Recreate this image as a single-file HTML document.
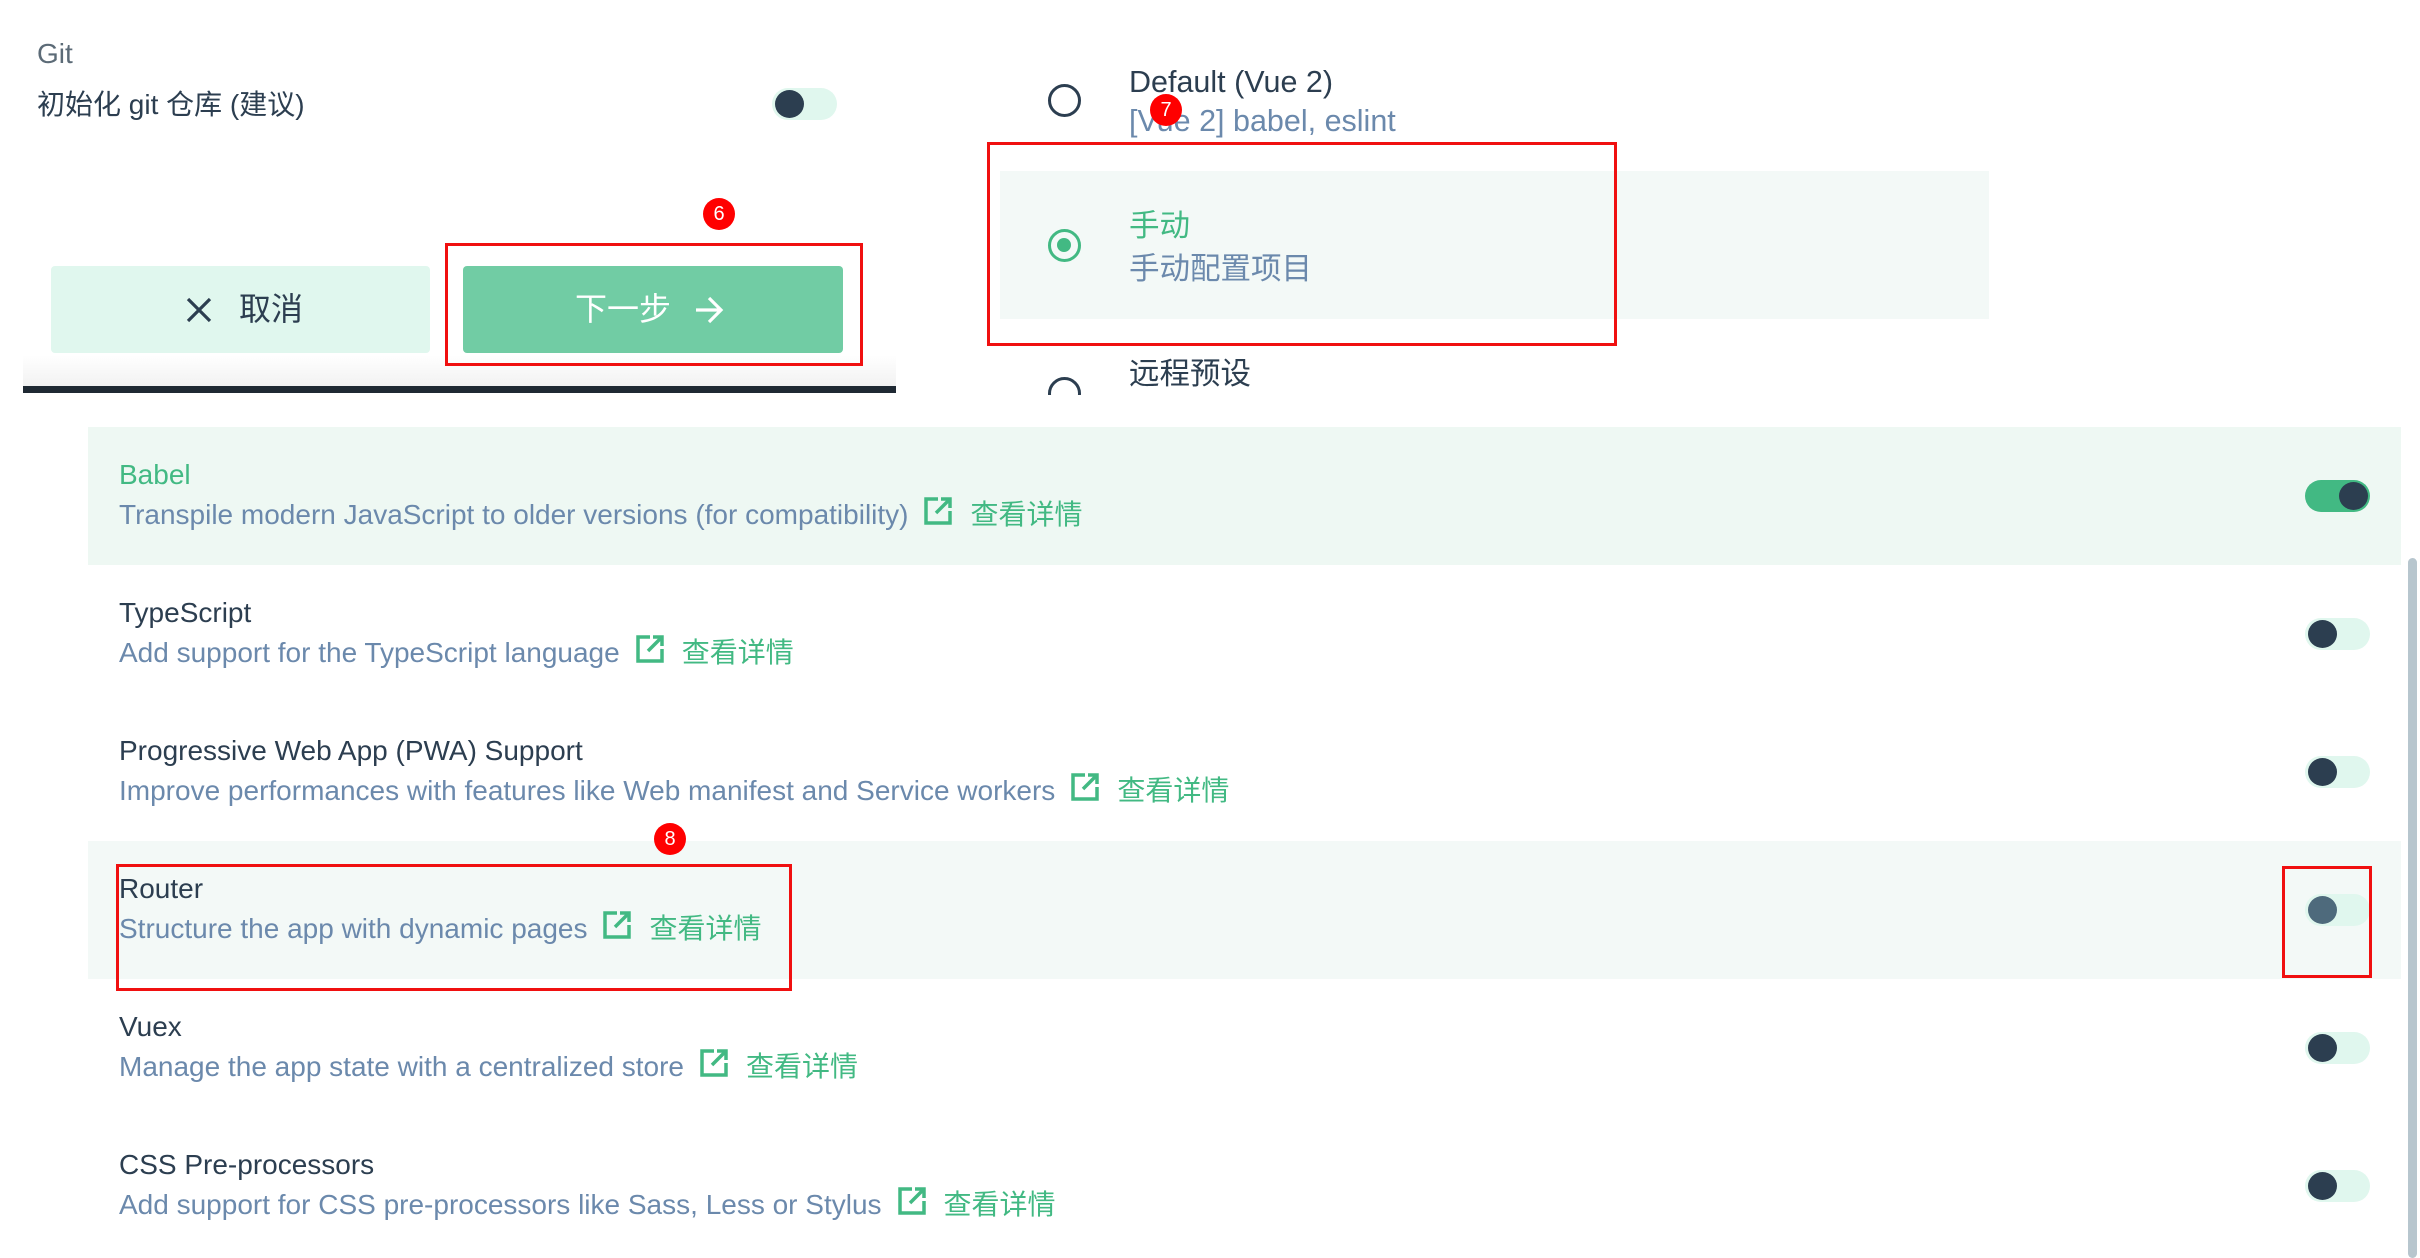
<!DOCTYPE html>
<html><head><meta charset="utf-8"><style>
*{margin:0;padding:0;box-sizing:border-box}
body{width:2420px;height:1250px;background:#fff;position:relative;overflow:hidden;font-family:"Liberation Sans","Noto Sans CJK SC",sans-serif;color:#2c3e50}
.a{position:absolute;white-space:nowrap}
.tog{position:absolute;width:65px;height:32px;border-radius:16px;background:#e0f7ee}
.tog i{position:absolute;top:2px;left:3px;width:29px;height:28px;border-radius:50%;background:#2c3e50}
.row{position:absolute;left:88px;width:2313px;height:138px}
.row .t{position:absolute;left:31px;top:32px;font-size:28px;line-height:32px;color:#2c3e50}
.row .d{position:absolute;left:31px;top:70px;font-size:28px;line-height:36px;color:#6b89ac;white-space:nowrap;display:flex;align-items:center}
.row .d svg{margin:0 17px 0 15px;position:relative;top:-4px}
.row .d span.g{color:#42b983;font-size:28px}
.badge{position:absolute;width:32px;height:32px;border-radius:50%;background:#f00;color:#fff;font-size:20px;line-height:32px;text-align:center;z-index:5}
.box{position:absolute;border:3px solid #f01010;z-index:4}
</style></head><body>

<div class="a" style="left:37px;top:38px;font-size:28px;line-height:32px;color:#5c6b77">Git</div>
<div class="a" style="left:37px;top:88px;font-size:28px;line-height:34px">初始化 git 仓库 (建议)</div>
<div class="tog" style="left:772px;top:88px"><i></i></div>

<div class="a" style="left:23px;top:355px;width:873px;height:31px;background:linear-gradient(#fff,#f2f2f2)"></div>
<div class="a" style="left:23px;top:386px;width:873px;height:7px;background:#1f2933"></div>

<div class="a" style="left:51px;top:266px;width:379px;height:87px;background:#e0f7ee;border-radius:4px"></div>
<svg class="a" style="left:185px;top:296px" width="28" height="28" viewBox="0 0 28 28"><path d="M3 3L25 25M25 3L3 25" stroke="#2c3e50" stroke-width="3.2"/></svg>
<div class="a" style="left:239px;top:290px;font-size:32px;line-height:38px">取消</div>

<div class="a" style="left:463px;top:266px;width:380px;height:87px;background:#71cca4;border-radius:4px"></div>
<div class="a" style="left:575px;top:290px;font-size:32px;line-height:38px;color:#fff">下一步</div>
<svg class="a" style="left:693px;top:295px" width="32" height="30" viewBox="0 0 32 30"><path d="M3 15H28M16 3L28 15L16 27" stroke="#fff" stroke-width="3.2" fill="none"/></svg>
<div class="box" style="left:445px;top:243px;width:418px;height:123px"></div>
<div class="badge" style="left:703px;top:198px">6</div>

<!-- presets -->
<div class="a" style="left:1048px;top:84px;width:33px;height:33px;border:3.5px solid #2c3e50;border-radius:50%"></div>
<div class="a" style="left:1129px;top:64px;font-size:30.5px;line-height:36px">Default (Vue 2)</div>
<div class="a" style="left:1129px;top:103px;font-size:30.5px;line-height:36px;color:#6b89ac">[Vue 2] babel, eslint</div>
<div class="badge" style="left:1150px;top:94px">7</div>

<div class="a" style="left:1000px;top:171px;width:989px;height:148px;background:#f3f9f7"></div>
<div class="a" style="left:1048px;top:229px;width:33px;height:33px;border:3.5px solid #42b983;border-radius:50%"><div style="position:absolute;left:6px;top:6px;width:14px;height:14px;border-radius:50%;background:#42b983"></div></div>
<div class="a" style="left:1129px;top:208px;font-size:30.5px;line-height:36px;color:#42b983">手动</div>
<div class="a" style="left:1129px;top:251px;font-size:30.5px;line-height:36px;color:#6b89ac">手动配置项目</div>
<div class="box" style="left:987px;top:142px;width:630px;height:204px"></div>

<div class="a" style="left:1000px;top:350px;width:1000px;height:45px;overflow:hidden">
<div class="a" style="left:48px;top:27px;width:33px;height:33px;border:3.5px solid #2c3e50;border-radius:50%"></div>
<div class="a" style="left:129px;top:6px;font-size:30.5px;line-height:36px">远程预设</div>
</div>

<!-- features -->
<svg width="0" height="0" style="position:absolute"><defs><g id="ext"><path d="M15 3H3V27H27V15" stroke="#42b983" stroke-width="3.5" fill="none"/><path d="M13 17L27 3M18 3H27V12" stroke="#42b983" stroke-width="3.5" fill="none"/></g></defs></svg>

<div class="row" style="top:427px;background:#eef8f3"><div class="t" style="color:#42b983">Babel</div><div class="d">Transpile modern JavaScript to older versions (for compatibility)<svg width="30" height="30"><use href="#ext"/></svg><span class="g">查看详情</span></div></div>
<div class="row" style="top:565px"><div class="t">TypeScript</div><div class="d">Add support for the TypeScript language<svg width="30" height="30"><use href="#ext"/></svg><span class="g">查看详情</span></div></div>
<div class="row" style="top:703px"><div class="t">Progressive Web App (PWA) Support</div><div class="d">Improve performances with features like Web manifest and Service workers<svg width="30" height="30"><use href="#ext"/></svg><span class="g">查看详情</span></div></div>
<div class="row" style="top:841px;background:#f3f9f7"><div class="t">Router</div><div class="d">Structure the app with dynamic pages<svg width="30" height="30"><use href="#ext"/></svg><span class="g">查看详情</span></div></div>
<div class="row" style="top:979px"><div class="t">Vuex</div><div class="d">Manage the app state with a centralized store<svg width="30" height="30"><use href="#ext"/></svg><span class="g">查看详情</span></div></div>
<div class="row" style="top:1117px"><div class="t">CSS Pre-processors</div><div class="d">Add support for CSS pre-processors like Sass, Less or Stylus<svg width="30" height="30"><use href="#ext"/></svg><span class="g">查看详情</span></div></div>

<div class="tog" style="left:2305px;top:480px;background:#42b983"><i style="left:34px"></i></div>
<div class="tog" style="left:2305px;top:618px"><i></i></div>
<div class="tog" style="left:2305px;top:756px"><i></i></div>
<div class="tog" style="left:2305px;top:894px"><i style="background:#4e6a7c"></i></div>
<div class="tog" style="left:2305px;top:1032px"><i></i></div>
<div class="tog" style="left:2305px;top:1170px"><i></i></div>

<div class="box" style="left:116px;top:864px;width:676px;height:127px"></div>
<div class="badge" style="left:654px;top:823px">8</div>
<div class="box" style="left:2282px;top:866px;width:90px;height:112px"></div>

<div class="a" style="left:2408px;top:558px;width:9px;height:700px;border-radius:5px;background:#b7c6ce"></div>
</body></html>
